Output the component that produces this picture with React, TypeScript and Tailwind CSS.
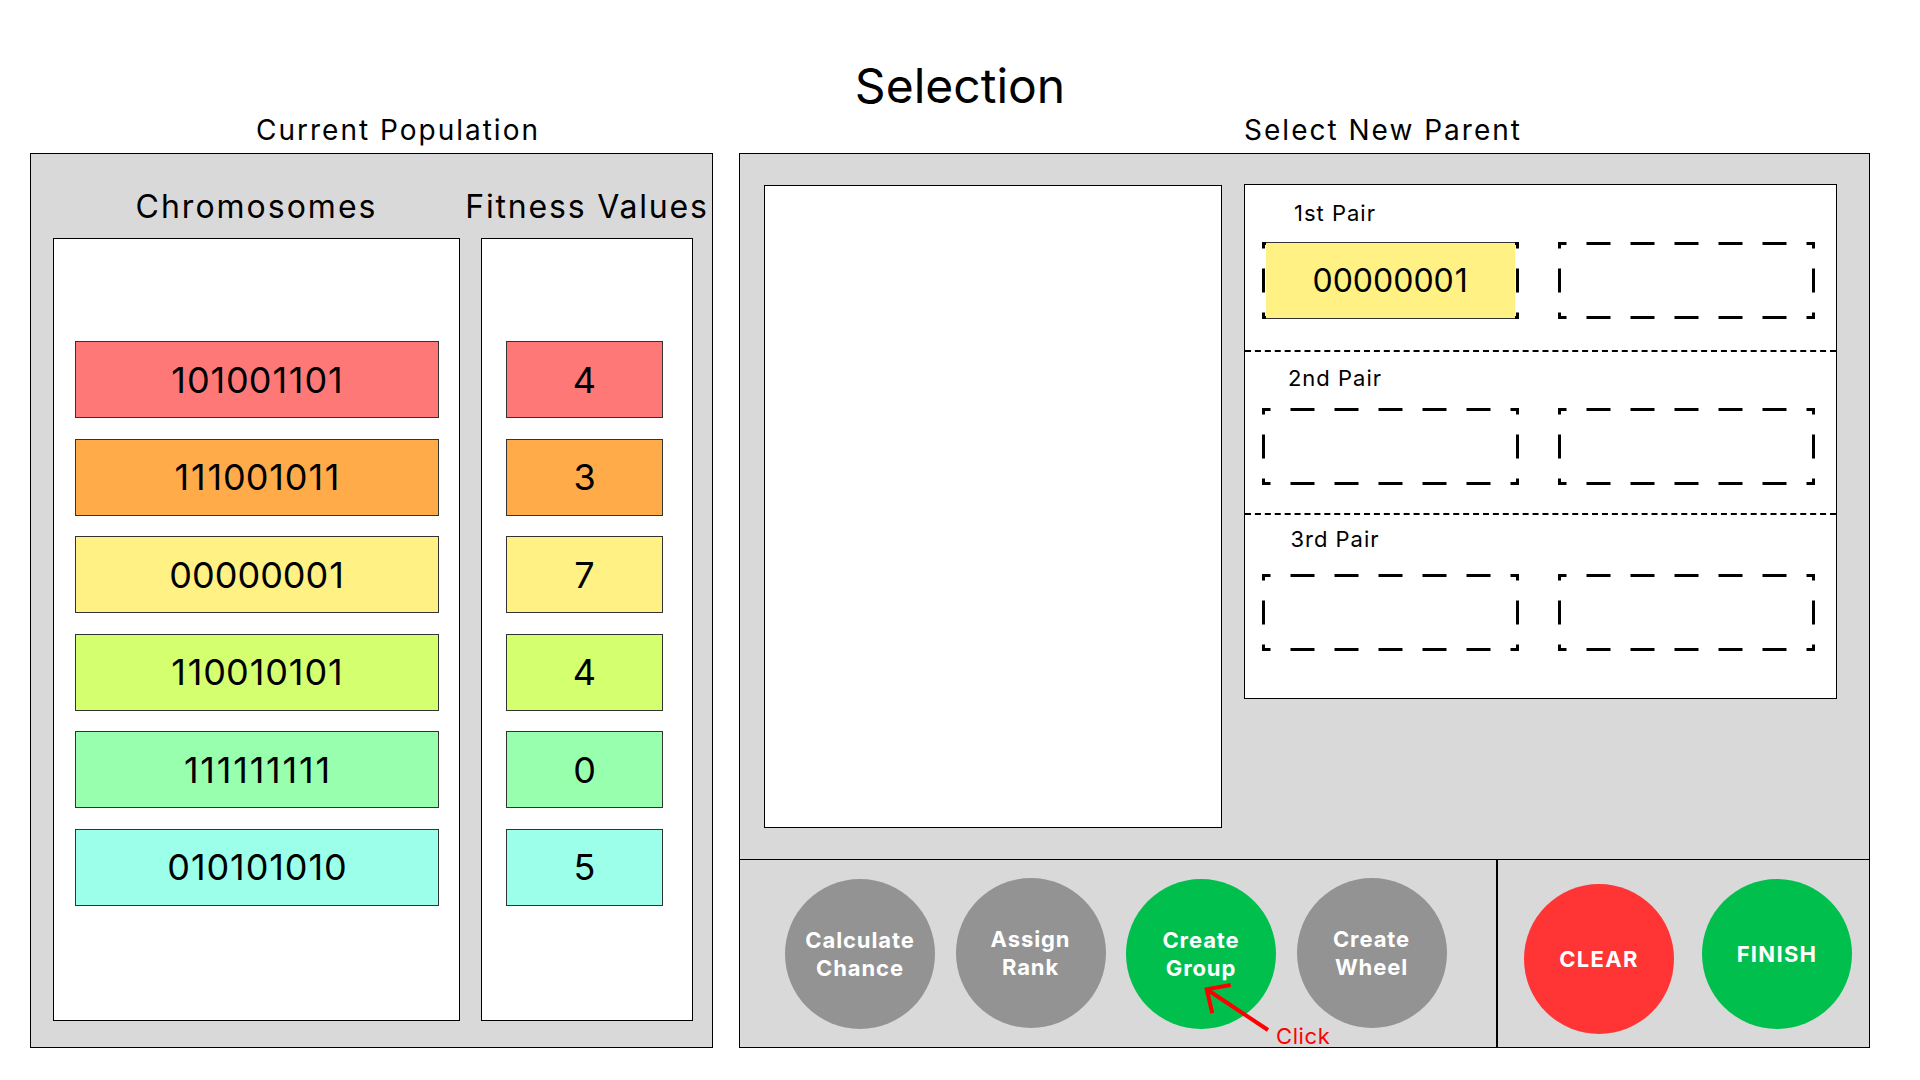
import React from 'react';

// population rows: chromosome string, fitness value, fill colour
const rows = [
  { bits: '101001101', fit: 4, bg: 'bg-[#ff7878]' },
  { bits: '111001011', fit: 3, bg: 'bg-[#ffab4a]' },
  { bits: '00000001', fit: 7, bg: 'bg-[#fff184]' },
  { bits: '110010101', fit: 4, bg: 'bg-[#d4ff6e]' },
  { bits: '111111111', fit: 0, bg: 'bg-[#98ffae]' },
  { bits: '010101010', fit: 5, bg: 'bg-[#9cffea]' },
];

const DASH = 24;
const GAP = 20;

// keeps a dash centred on each side so the corners come out symmetric
const dashOffset = (len: number) => {
  const period = DASH + GAP;
  return (((DASH / 2 - len / 2) % period) + period) % period;
};

// the "1" in the mockup font is a bit wider than Inter's
const Bits = ({ value }: { value: string }) => (
  <span>
    {value.split('').map((c, i) =>
      c === '1' ? (
        <span key={i} className="px-[0.9px]">
          1
        </span>
      ) : (
        <span key={i}>{c}</span>
      )
    )}
  </span>
);

const DashedSlot = ({ children }: { children?: React.ReactNode }) => {
  const w = 257;
  const h = 77;
  const s = 3;
  const hw = dashOffset(w);
  const hh = dashOffset(h);
  return (
    <div className="relative w-[257px] h-[77px]">
      <svg className="absolute inset-0" width={w} height={h} viewBox={`0 0 ${w} ${h}`}>
        <g stroke="#000" strokeWidth={s} strokeDasharray={`${DASH} ${GAP}`}>
          <line x1={0} y1={s / 2} x2={w} y2={s / 2} strokeDashoffset={hw} />
          <line x1={0} y1={h - s / 2} x2={w} y2={h - s / 2} strokeDashoffset={hw} />
          <line x1={s / 2} y1={0} x2={s / 2} y2={h} strokeDashoffset={hh} />
          <line x1={w - s / 2} y1={0} x2={w - s / 2} y2={h} strokeDashoffset={hh} />
        </g>
      </svg>
      {children}
    </div>
  );
};

const PairSection = ({
  label,
  first,
  pt,
  gap,
  pb,
}: {
  label: string;
  first?: string;
  pt: string;
  gap: string;
  pb: string;
}) => (
  <div className={`${pt} ${pb}`}>
    <div className="ml-[17px] w-[146px] text-center text-[22px] leading-[26px] tracking-[1px] text-black">{label}</div>
    <div className={`flex gap-[39px] pl-[17px] ${gap}`}>
      <DashedSlot>
        {first && (
          <div className="absolute left-[4px] right-[4px] top-0 bottom-0 bg-[#fff184] border-y border-[#333] flex items-center justify-center text-[32px] text-black">
            <Bits value={first} />
          </div>
        )}
      </DashedSlot>
      <DashedSlot />
    </div>
  </div>
);

const Circle = ({
  color,
  lines,
  extra = '',
}: {
  color: string;
  lines: string[];
  extra?: string;
}) => (
  <button
    className={`w-[150px] h-[150px] shrink-0 rounded-full ${color} ${extra} flex flex-col items-center justify-center text-white font-bold text-[22px] leading-[28px]`}
  >
    {lines.map((l) => (
      <span key={l}>{l}</span>
    ))}
  </button>
);

export default function App() {
  return (
    <div className="relative w-[1920px] h-[1080px] bg-white font-['Inter',sans-serif] text-black overflow-hidden">
      <h1 className="pt-[62px] text-center text-[48px] leading-[48px] font-normal">Selection</h1>

      <div className="flex mt-[3px]">
        {/* current population */}
        <div className="ml-[30px] w-[683px]">
          <div className="pl-[53px] text-center text-[28px] leading-[34px] tracking-[2px] mb-[6px]">Current Population</div>
          <div className="h-[895px] border border-black bg-[#d9d9d9] pt-[33px]">
            <div className="flex gap-[21px] ml-[22px]">
              <div className="w-[407px] flex justify-center text-[32px] leading-[39px] tracking-[2px] whitespace-nowrap">Chromosomes</div>
              <div className="w-[212px] flex justify-center text-[32px] leading-[39px] tracking-[1.8px] whitespace-nowrap">Fitness Values</div>
            </div>
            <div className="flex gap-[21px] ml-[22px] mt-[12px]">
              <div className="w-[407px] h-[783px] border border-black bg-white pt-[102px]">
                <div className="flex flex-col gap-[20.5px] ml-[21px]">
                  {rows.map((r) => (
                    <div
                      key={r.bits}
                      className={`w-[364px] h-[77px] ${r.bg} border border-[#333] flex items-center justify-center text-[36px]`}
                    >
                      <Bits value={r.bits} />
                    </div>
                  ))}
                </div>
              </div>
              <div className="w-[212px] h-[783px] border border-black bg-white pt-[102px]">
                <div className="flex flex-col gap-[20.5px] ml-[24px]">
                  {rows.map((r, i) => (
                    <div
                      key={i}
                      className={`w-[157px] h-[77px] ${r.bg} border border-[#333] flex items-center justify-center text-[36px]`}
                    >
                      {r.fit}
                    </div>
                  ))}
                </div>
              </div>
            </div>
          </div>
        </div>

        {/* select new parent */}
        <div className="ml-[26px] w-[1131px]">
          <div className="pl-[157px] text-center text-[28px] leading-[34px] tracking-[2px] mb-[6px]">Select New Parent</div>
          <div className="h-[895px] border border-black bg-[#d9d9d9] flex flex-col">
            <div className="h-[706px] border-b border-black flex items-start pt-[30px]">
              <div className="ml-[24px] mt-[1px] w-[458px] h-[643px] border border-black bg-white" />
              <div className="ml-[22px] w-[593px] h-[515px] border border-black bg-white">
                <PairSection label="1st Pair" first="00000001" pt="pt-[15px]" gap="mt-[16px]" pb="pb-[31px]" />
                <div className="border-t-2 border-dashed border-black" />
                <PairSection label="2nd Pair" pt="pt-[13px]" gap="mt-[17px]" pb="pb-[28px]" />
                <div className="border-t-2 border-dashed border-black" />
                <PairSection label="3rd Pair" pt="pt-[11px]" gap="mt-[22px]" pb="pb-0" />
              </div>
            </div>
            <div className="flex-1 flex">
              <div className="w-[758px] border-r-2 border-black flex items-center gap-[20.5px] pl-[45px] tracking-[0.9px]">
                <Circle color="bg-[#939393]" lines={['Calculate', 'Chance']} />
                <Circle color="bg-[#939393]" lines={['Assign', 'Rank']} extra="-translate-y-[1px]" />
                <Circle color="bg-[#00bf4d]" lines={['Create', 'Group']} />
                <Circle color="bg-[#939393]" lines={['Create', 'Wheel']} extra="-translate-y-[1px]" />
              </div>
              <div className="flex-1 flex items-center gap-[28px] pl-[26px] tracking-[1.3px]">
                <Circle color="bg-[#ff3535]" lines={['CLEAR']} extra="translate-y-[5px]" />
                <Circle color="bg-[#00bf4d]" lines={['FINISH']} />
              </div>
            </div>
          </div>
        </div>
      </div>

      {/* click hint over the Create Group button */}
      <svg className="absolute left-[1195px] top-[975px]" width={80} height={65} viewBox="0 0 80 65">
        <g stroke="#ff0000" strokeWidth={4} fill="none">
          <line x1={73} y1={55} x2={12} y2={14.5} />
          <polyline points="35.7,10 11.7,14.3 17.3,38.3" strokeLinejoin="miter" />
        </g>
      </svg>
      <span className="absolute left-[1276px] top-[1023px] text-[22px] leading-[26px] tracking-[0.6px] text-[#ff0000]">Click</span>
    </div>
  );
}
